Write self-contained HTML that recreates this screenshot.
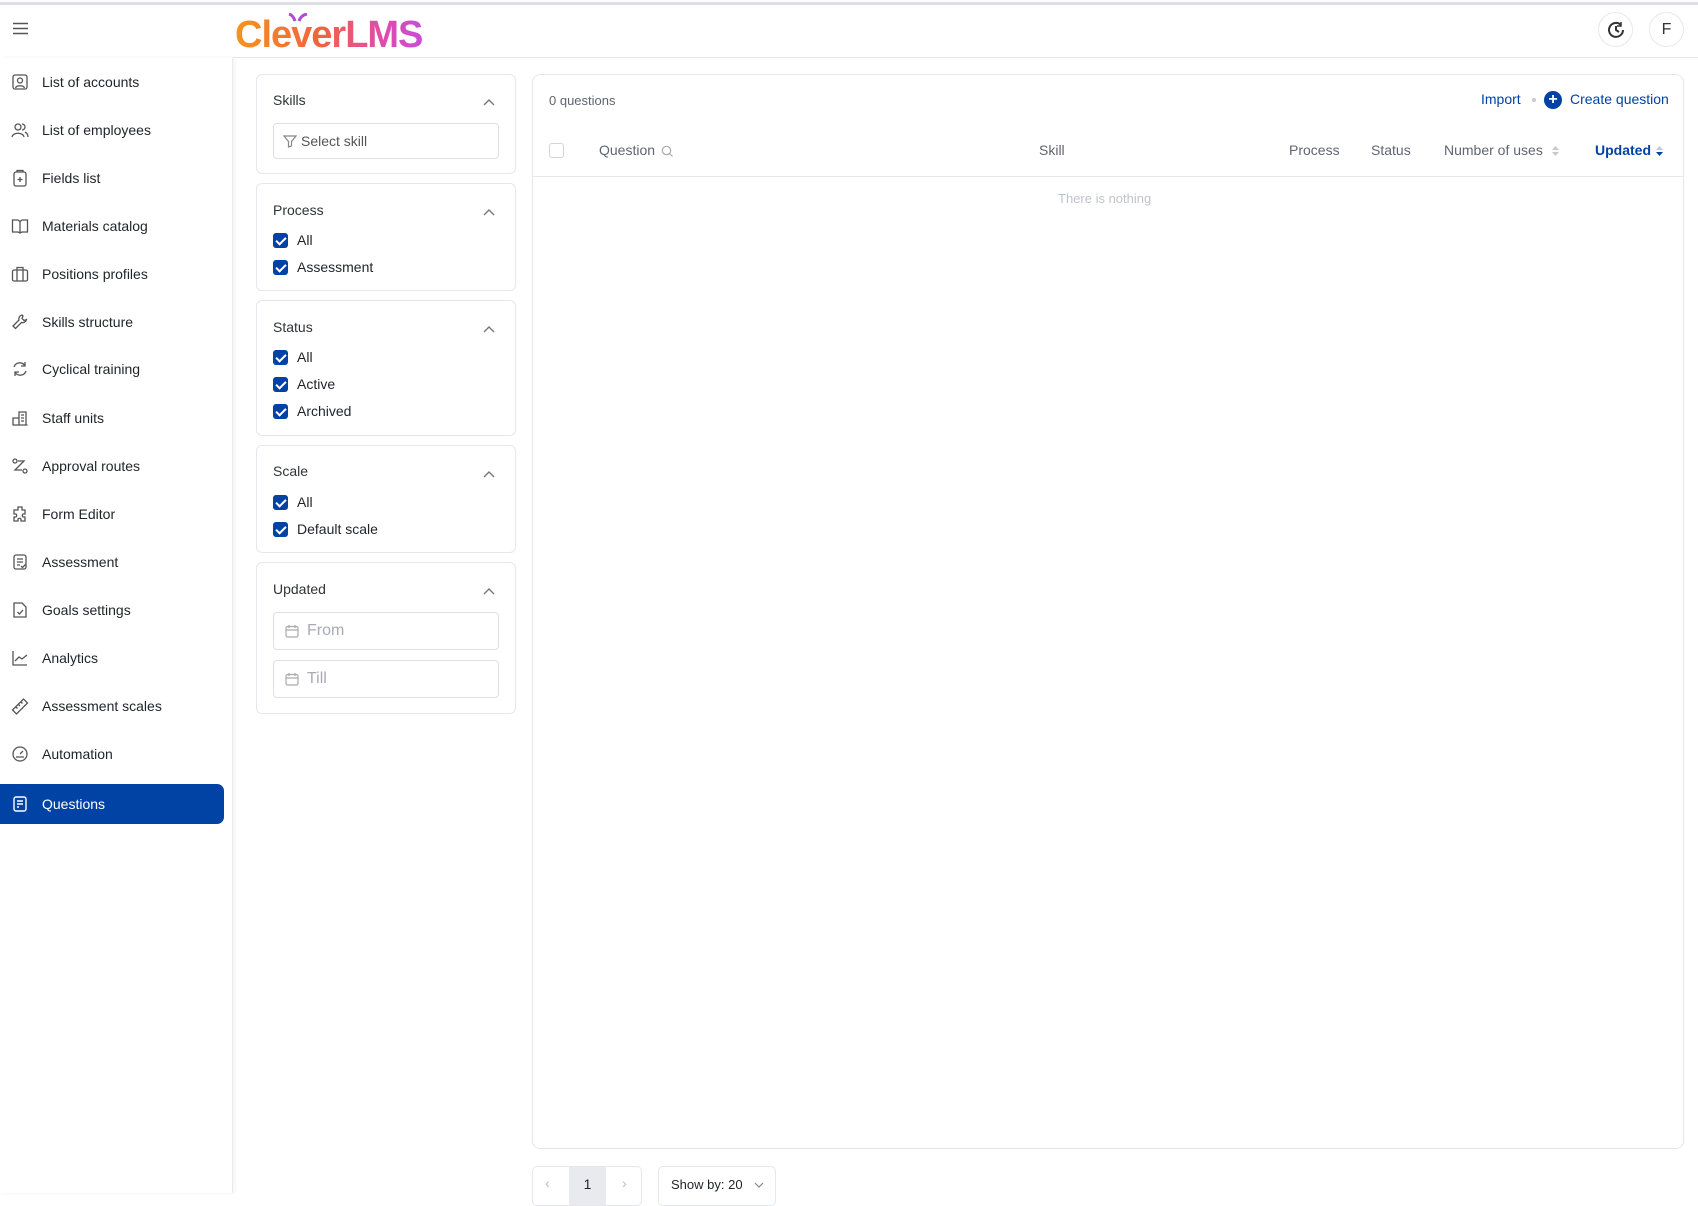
<!DOCTYPE html>
<html><head><meta charset="utf-8"><style>
*{box-sizing:border-box;margin:0;padding:0}
body{width:1698px;height:1193px;overflow:hidden;background:#fff;font-family:"Liberation Sans",Arial,sans-serif;color:#1f2329;position:relative}
.abs{position:absolute}
.topbar{left:0;top:2px;width:1698px;height:3px;background:#dcdfe3}
.hline{left:233px;top:57px;width:1465px;height:1px;background:#e6e8eb}
.side{left:0;top:58px;width:233px;height:1135px;border-right:1px solid #e8eaed;box-shadow:2px 0 4px rgba(0,0,0,.05)}
.item{position:absolute;left:0;width:224px;height:40px;display:flex;align-items:center;font-size:14px;color:#1f2329}
.item svg{position:absolute;left:11px;width:18px;height:18px}
.item span{position:absolute;left:42px}
.item.act{background:#0043a4;color:#fff;border-radius:0 7px 7px 0}
.card{position:absolute;left:256px;width:260px;border:1px solid #e4e7ec;border-radius:6px;background:#fff}
.ttl{position:absolute;left:16px;font-size:14px;color:#303338}
.chev{position:absolute;left:226px;width:12px;height:8px}
.cb{position:absolute;left:16px;display:flex;align-items:center;font-size:14px;color:#1f2329}
.cb i{display:inline-block;width:15px;height:15px;background:#0043a4;border-radius:3px;margin-right:9px;position:relative}
.cb i:after{content:"";position:absolute;left:5px;top:2px;width:4px;height:8px;border:solid #fff;border-width:0 2px 2px 0;transform:rotate(45deg)}
.inp{position:absolute;left:16px;width:226px;border:1px solid #dcdfe6;border-radius:4px;display:flex;align-items:center;color:#a8abb2;font-size:16px}
.main{left:532px;top:74px;width:1152px;height:1075px;border:1px solid #e4e7ec;border-radius:8px}
.th{position:absolute;top:142px;font-size:14px;color:#5f6670}
</style></head><body>
<div class="abs topbar"></div>
<div class="abs hline"></div>
<svg class="abs" style="left:13px;top:22px" width="15" height="13"><path d="M0 1.5H15M0 6.5H15M0 11.5H15" stroke="#555" stroke-width="1.5"/></svg>
<div class="abs" style="left:235px;top:12px;font-size:38px;font-weight:bold;letter-spacing:-1px;background:linear-gradient(90deg,#f7931e,#f0643c 45%,#e04bb0 80%,#c94cd6);-webkit-background-clip:text;color:transparent;line-height:46px">CleverLMS</div>
<svg class="abs" style="left:287px;top:13px" width="22" height="10"><path d="M2 1 Q6 2 8 8 M20 1 Q14 2 12 8" stroke="#b04cd0" stroke-width="3" fill="none"/></svg>
<div class="abs" style="left:1598px;top:12px;width:35px;height:35px;border:1px solid #e6e8eb;border-radius:50%"></div>
<svg class="abs" style="left:1606px;top:20px" width="20" height="20" viewBox="0 0 20 20"><path d="M17 10a7 7 0 1 1-2-5" fill="none" stroke="#333" stroke-width="2"/><path d="M10 6v4l3 2" fill="none" stroke="#333" stroke-width="2"/><path d="M15 2v4h-4" fill="none" stroke="#333" stroke-width="1.5"/></svg>
<div class="abs" style="left:1649px;top:12px;width:35px;height:35px;border:1px solid #e6e8eb;border-radius:50%;text-align:center;line-height:33px;font-size:16px;color:#333">F</div>

<div class="abs side"></div>
<div class="abs" style="left:0;top:0">
<div class="item" style="top:62px"><svg viewBox="0 0 18 18"><rect x="2" y="2" width="14" height="14" rx="2" fill="none" stroke="#555" stroke-width="1.3"/><circle cx="9" cy="7.5" r="2.5" fill="none" stroke="#555" stroke-width="1.3"/><path d="M4.5 15c1-3 8-3 9 0" fill="none" stroke="#555" stroke-width="1.3"/></svg><span>List of accounts</span></div>
<div class="item" style="top:110px"><svg viewBox="0 0 18 18"><circle cx="7" cy="6" r="3" fill="none" stroke="#555" stroke-width="1.3"/><path d="M1 16c1-5 11-5 12 0M11 3a3 3 0 0 1 0 6M14 11c2 1 3 3 3 5" fill="none" stroke="#555" stroke-width="1.3"/></svg><span>List of employees</span></div>
<div class="item" style="top:158px"><svg viewBox="0 0 18 18"><rect x="3" y="3" width="12" height="14" rx="2" fill="none" stroke="#555" stroke-width="1.3"/><path d="M6 3V1.5h6V3M9 8v5M6.5 10.5h5" fill="none" stroke="#555" stroke-width="1.3"/></svg><span>Fields list</span></div>
<div class="item" style="top:206px"><svg viewBox="0 0 18 18"><path d="M1.5 3h5.5l2 1.5 2-1.5h5.5v12h-5.5l-2 1-2-1H1.5zM9 4.5v11.5" fill="none" stroke="#555" stroke-width="1.3"/></svg><span>Materials catalog</span></div>
<div class="item" style="top:254px"><svg viewBox="0 0 18 18"><rect x="1.5" y="5" width="15" height="11" rx="1.5" fill="none" stroke="#555" stroke-width="1.3"/><path d="M6 5V2.5h6V5M6 5v11M12 5v11" fill="none" stroke="#555" stroke-width="1.3"/></svg><span>Positions profiles</span></div>
<div class="item" style="top:302px"><svg viewBox="0 0 18 18"><path d="M11 2a4 4 0 0 0-3 5L2 13l2.5 2.5 6-6a4 4 0 0 0 5-3l-2.5 1-2-2 1-2.5z" fill="none" stroke="#555" stroke-width="1.3"/></svg><span>Skills structure</span></div>
<div class="item" style="top:349px"><svg viewBox="0 0 18 18"><path d="M3 7a6 6 0 0 1 11-1M15 11a6 6 0 0 1-11 1M14 2v4h-4M4 16v-4h4" fill="none" stroke="#555" stroke-width="1.3"/></svg><span>Cyclical training</span></div>
<div class="item" style="top:398px"><svg viewBox="0 0 18 18"><path d="M1.5 16h15M8 16V3h7v13M2 16V9h6M10 6h3M10 9h3M10 12h3" fill="none" stroke="#555" stroke-width="1.3"/></svg><span>Staff units</span></div>
<div class="item" style="top:446px"><svg viewBox="0 0 18 18"><circle cx="4" cy="4" r="2" fill="none" stroke="#555" stroke-width="1.3"/><circle cx="14" cy="14" r="2" fill="none" stroke="#555" stroke-width="1.3"/><path d="M7 4h6l-9 9h7" fill="none" stroke="#555" stroke-width="1.3"/></svg><span>Approval routes</span></div>
<div class="item" style="top:494px"><svg viewBox="0 0 18 18"><path d="M7 2h4v3h3v4h-2a2 2 0 0 0 0 3h2v4h-4v-2a2 2 0 0 0-3 0v2H3v-4h2a2 2 0 0 0 0-3H3V5h4z" fill="none" stroke="#555" stroke-width="1.3"/></svg><span>Form Editor</span></div>
<div class="item" style="top:542px"><svg viewBox="0 0 18 18"><rect x="3" y="2" width="12" height="14" rx="2" fill="none" stroke="#555" stroke-width="1.3"/><path d="M6 6h6M6 9h6M6 12h3M10 13l1.5 1.5 3-3" fill="none" stroke="#555" stroke-width="1.3"/></svg><span>Assessment</span></div>
<div class="item" style="top:590px"><svg viewBox="0 0 18 18"><path d="M3 2h8l4 4v10H3z" fill="none" stroke="#555" stroke-width="1.3"/><path d="M6.5 11l2 2 3.5-4" fill="none" stroke="#555" stroke-width="1.3"/></svg><span>Goals settings</span></div>
<div class="item" style="top:638px"><svg viewBox="0 0 18 18"><path d="M2 2v14h14M4 12l4-4 3 2 5-4" fill="none" stroke="#555" stroke-width="1.3"/></svg><span>Analytics</span></div>
<div class="item" style="top:686px"><svg viewBox="0 0 18 18"><path d="M1.5 13l11-11 4 4-11 11zM5 10l1.5 1.5M7.5 7.5 9 9M10 5l1.5 1.5" fill="none" stroke="#555" stroke-width="1.3"/></svg><span>Assessment scales</span></div>
<div class="item" style="top:734px"><svg viewBox="0 0 18 18"><circle cx="9" cy="9" r="7" fill="none" stroke="#555" stroke-width="1.3"/><path d="M9 9l3-3M5 12h8" fill="none" stroke="#555" stroke-width="1.3"/></svg><span>Automation</span></div>
<div class="item act" style="top:784px"><svg viewBox="0 0 18 18"><rect x="3" y="2" width="12" height="14" rx="2" fill="none" stroke="#fff" stroke-width="1.4"/><path d="M6 6h6M6 9h6M6 12h2" fill="none" stroke="#fff" stroke-width="1.4"/></svg><span>Questions</span></div>
</div>

<div class="card" style="top:74px;height:100px"><div class="ttl" style="top:17px">Skills</div><svg class="chev" style="top:23px" viewBox="0 0 12 8"><path d="M1 7l5-5 5 5" fill="none" stroke="#777" stroke-width="1.4"/></svg>
<div class="inp" style="top:48px;height:36px;font-size:14px;color:#555"><svg style="margin:0 4px 0 9px" width="14" height="14" viewBox="0 0 14 14"><path d="M1 2h12L8.5 7.5V12L5.5 13V7.5z" fill="none" stroke="#888" stroke-width="1.2"/></svg>Select skill</div></div>
<div class="card" style="top:183px;height:108px"><div class="ttl" style="top:18px">Process</div><svg class="chev" style="top:24px" viewBox="0 0 12 8"><path d="M1 7l5-5 5 5" fill="none" stroke="#777" stroke-width="1.4"/></svg>
<div class="cb" style="top:48px"><i></i>All</div><div class="cb" style="top:75px"><i></i>Assessment</div></div>
<div class="card" style="top:300px;height:136px"><div class="ttl" style="top:18px">Status</div><svg class="chev" style="top:24px" viewBox="0 0 12 8"><path d="M1 7l5-5 5 5" fill="none" stroke="#777" stroke-width="1.4"/></svg>
<div class="cb" style="top:48px"><i></i>All</div><div class="cb" style="top:75px"><i></i>Active</div><div class="cb" style="top:102px"><i></i>Archived</div></div>
<div class="card" style="top:445px;height:108px"><div class="ttl" style="top:17px">Scale</div><svg class="chev" style="top:24px" viewBox="0 0 12 8"><path d="M1 7l5-5 5 5" fill="none" stroke="#777" stroke-width="1.4"/></svg>
<div class="cb" style="top:48px"><i></i>All</div><div class="cb" style="top:75px"><i></i>Default scale</div></div>
<div class="card" style="top:562px;height:152px"><div class="ttl" style="top:18px">Updated</div><svg class="chev" style="top:24px" viewBox="0 0 12 8"><path d="M1 7l5-5 5 5" fill="none" stroke="#777" stroke-width="1.4"/></svg>
<div class="inp" style="top:49px;height:38px"><svg style="margin:0 8px 0 11px" width="14" height="14" viewBox="0 0 14 14"><rect x="1" y="2.5" width="12" height="10.5" rx="1.5" fill="none" stroke="#aaa" stroke-width="1.2"/><path d="M1 6h12M4 1v3M10 1v3" stroke="#aaa" stroke-width="1.2"/></svg>From</div>
<div class="inp" style="top:97px;height:38px"><svg style="margin:0 8px 0 11px" width="14" height="14" viewBox="0 0 14 14"><rect x="1" y="2.5" width="12" height="10.5" rx="1.5" fill="none" stroke="#aaa" stroke-width="1.2"/><path d="M1 6h12M4 1v3M10 1v3" stroke="#aaa" stroke-width="1.2"/></svg>Till</div></div>

<div class="abs main"></div>
<div class="abs" style="left:549px;top:93px;font-size:13px;color:#5f6670">0 questions</div>
<div class="abs" style="left:1481px;top:91px;font-size:14px;color:#0043a4">Import</div>
<div class="abs" style="left:1532px;top:98px;width:4px;height:4px;border-radius:50%;background:#c5cbd6"></div>
<div class="abs" style="left:1544px;top:91px;width:18px;height:18px;border-radius:50%;background:#0043a4;color:#fff;text-align:center;font-size:16px;line-height:18px;font-weight:bold">+</div>
<div class="abs" style="left:1570px;top:91px;font-size:14px;color:#0043a4">Create question</div>
<div class="abs" style="left:549px;top:143px;width:15px;height:15px;border:1px solid #d0d4da;border-radius:3px"></div>
<div class="th" style="left:599px">Question</div>
<svg class="abs" style="left:661px;top:145px" width="13" height="13"><circle cx="5.5" cy="5.5" r="4.2" fill="none" stroke="#aaa" stroke-width="1.2"/><path d="M8.5 8.5l3 3" stroke="#aaa" stroke-width="1.2"/></svg>
<div class="th" style="left:1039px">Skill</div>
<div class="th" style="left:1289px">Process</div>
<div class="th" style="left:1371px">Status</div>
<div class="th" style="left:1444px">Number of uses</div>
<svg class="abs" style="left:1551px;top:144px" width="9" height="14"><path d="M1 6L4.5 2 8 6zM1 8l3.5 4L8 8z" fill="#c5c9cf"/></svg>
<div class="th" style="left:1595px;color:#0043a4;font-weight:bold">Updated</div>
<svg class="abs" style="left:1655px;top:144px" width="9" height="14"><path d="M1 6L4.5 2 8 6z" fill="#c5c9cf"/><path d="M1 8l3.5 4L8 8z" fill="#0043a4"/></svg>
<div class="abs" style="left:533px;top:176px;width:1150px;height:1px;background:#e6e8eb"></div>
<div class="abs" style="left:1058px;top:191px;font-size:13px;color:#c0c4cc">There is nothing</div>

<div class="abs" style="left:532px;top:1166px;width:110px;height:40px;border:1px solid #e4e7ec;border-radius:5px;overflow:hidden">
<div class="abs" style="left:36px;top:0;width:37px;height:40px;background:#e9eaed;text-align:center;line-height:34px;font-size:14px">1</div>
<div class="abs" style="left:12px;top:8px;color:#bbb;font-size:14px">‹</div><div class="abs" style="left:89px;top:8px;color:#bbb;font-size:14px">›</div></div>
<div class="abs" style="left:658px;top:1166px;width:118px;height:40px;border:1px solid #e4e7ec;border-radius:5px;font-size:13px;padding:10px 0 0 12px">Show by: 20 <svg width="10" height="7" style="margin-left:8px"><path d="M1 1l4 4 4-4" fill="none" stroke="#888" stroke-width="1.2"/></svg></div>
</body></html>
